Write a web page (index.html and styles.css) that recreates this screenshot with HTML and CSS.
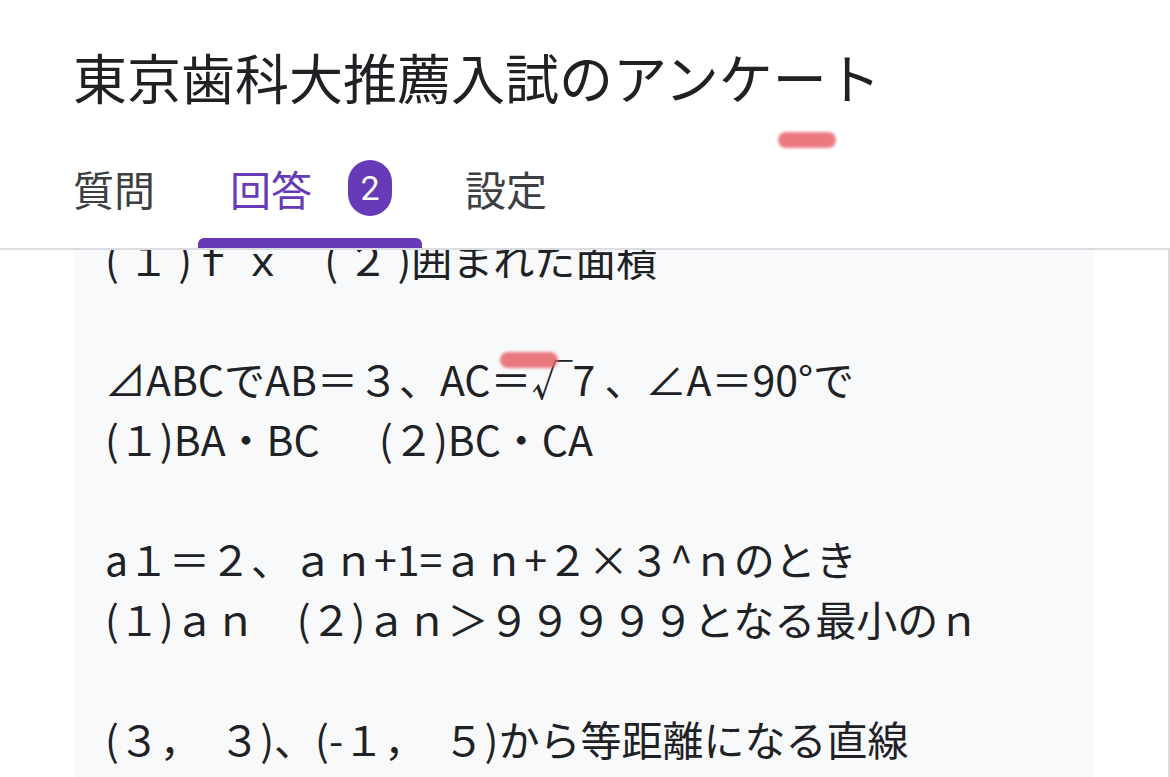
FILE: index.html
```html
<!DOCTYPE html>
<html lang="ja">
<head>
<meta charset="utf-8">
<link rel="stylesheet" href="styles.css">
</head>
<body>
<div class="page">
  <header class="header">
    <h1 class="title">東京歯科大推薦入試のアンケート</h1>
    <nav class="tabs">
      <div class="tab">質問</div>
      <div class="tab active">回答<span class="badge">2</span></div>
      <div class="tab">設定</div>
    </nav>
  </header>
  <section class="panel">
    <div class="card">
      <p class="line">( １ )ｆ ｘ　( ２ )囲まれた面積</p>
      <p class="line"></p>
      <p class="line">⊿ABCでAB＝３、AC＝√7 、∠A＝90°で</p>
      <p class="line">(１)BA・BC　  (２)BC・CA</p>
      <p class="line"></p>
      <p class="line">a１＝２、ａｎ+1=ａｎ+２×３^ｎのとき</p>
      <p class="line">(１)ａｎ　(２)ａｎ＞９９９９９となる最小のｎ</p>
      <p class="line"></p>
      <p class="line">(３，  ３)、(-１，  ５)から等距離になる直線</p>
    </div>
  </section>
  <div class="mark mark-title"></div>
  <div class="mark mark-body"></div>
</div>
</body>
</html>
```

FILE: styles.css
```css
html, body {
  margin: 0;
  padding: 0;
  background: #ffffff;
}
.page {
  position: relative;
  width: 1170px;
  height: 777px;
  overflow: hidden;
  display: flex;
  flex-direction: column;
  font-family: "Noto Sans CJK JP", "Noto Sans", sans-serif;
  color: #202124;
}
.header {
  padding-left: 73px;
}
.title {
  margin: 0;
  padding-top: 46px;
  font-size: 54px;
  font-weight: 400;
  line-height: 62px;
  color: #202124;
}
.tabs {
  display: flex;
  gap: 11px;
  margin-left: -32px;
  margin-top: 38px;
  height: 102px;
}
.tab {
  position: relative;
  display: flex;
  align-items: center;
  padding: 0 32px 18px 32px;
  font-size: 41px;
  color: #3c4043;
  line-height: 1;
}
.tab.active {
  color: #673ab7;
  padding-right: 30px;
}
.tab.active::after {
  content: "";
  position: absolute;
  left: 0;
  right: 0;
  bottom: 0;
  height: 10px;
  background: #673ab7;
  border-radius: 6px 6px 0 0;
}
.badge {
  display: inline-flex;
  align-items: center;
  justify-content: center;
  width: 44px;
  height: 56px;
  margin-left: 36px;
  border-radius: 22px;
  background: #673ab7;
  color: #ffffff;
  font-family: Roboto, "Noto Sans", sans-serif;
  font-size: 34px;
}
.panel {
  flex: 1;
  border-top: 2px solid #dadce0;
  border-right: 2px solid #dadce0;
  overflow: hidden;
}
.card {
  margin-left: 75px;
  width: 988px;
  padding-left: 30px;
  margin-top: -22px;
  height: 600px;
  background: #f8f9fa;
}
.line {
  margin: 0;
  height: 60px;
  line-height: 60px;
  font-size: 41px;
  white-space: pre;
  color: #202124;
}
.mark {
  position: absolute;
  width: 58px;
  height: 16px;
  border-radius: 8px;
  background: #e8626a;
  opacity: 0.85;
  filter: blur(1.5px);
}
.mark-title {
  left: 778px;
  top: 132px;
}
.mark-body {
  left: 500px;
  top: 352px;
}
```
